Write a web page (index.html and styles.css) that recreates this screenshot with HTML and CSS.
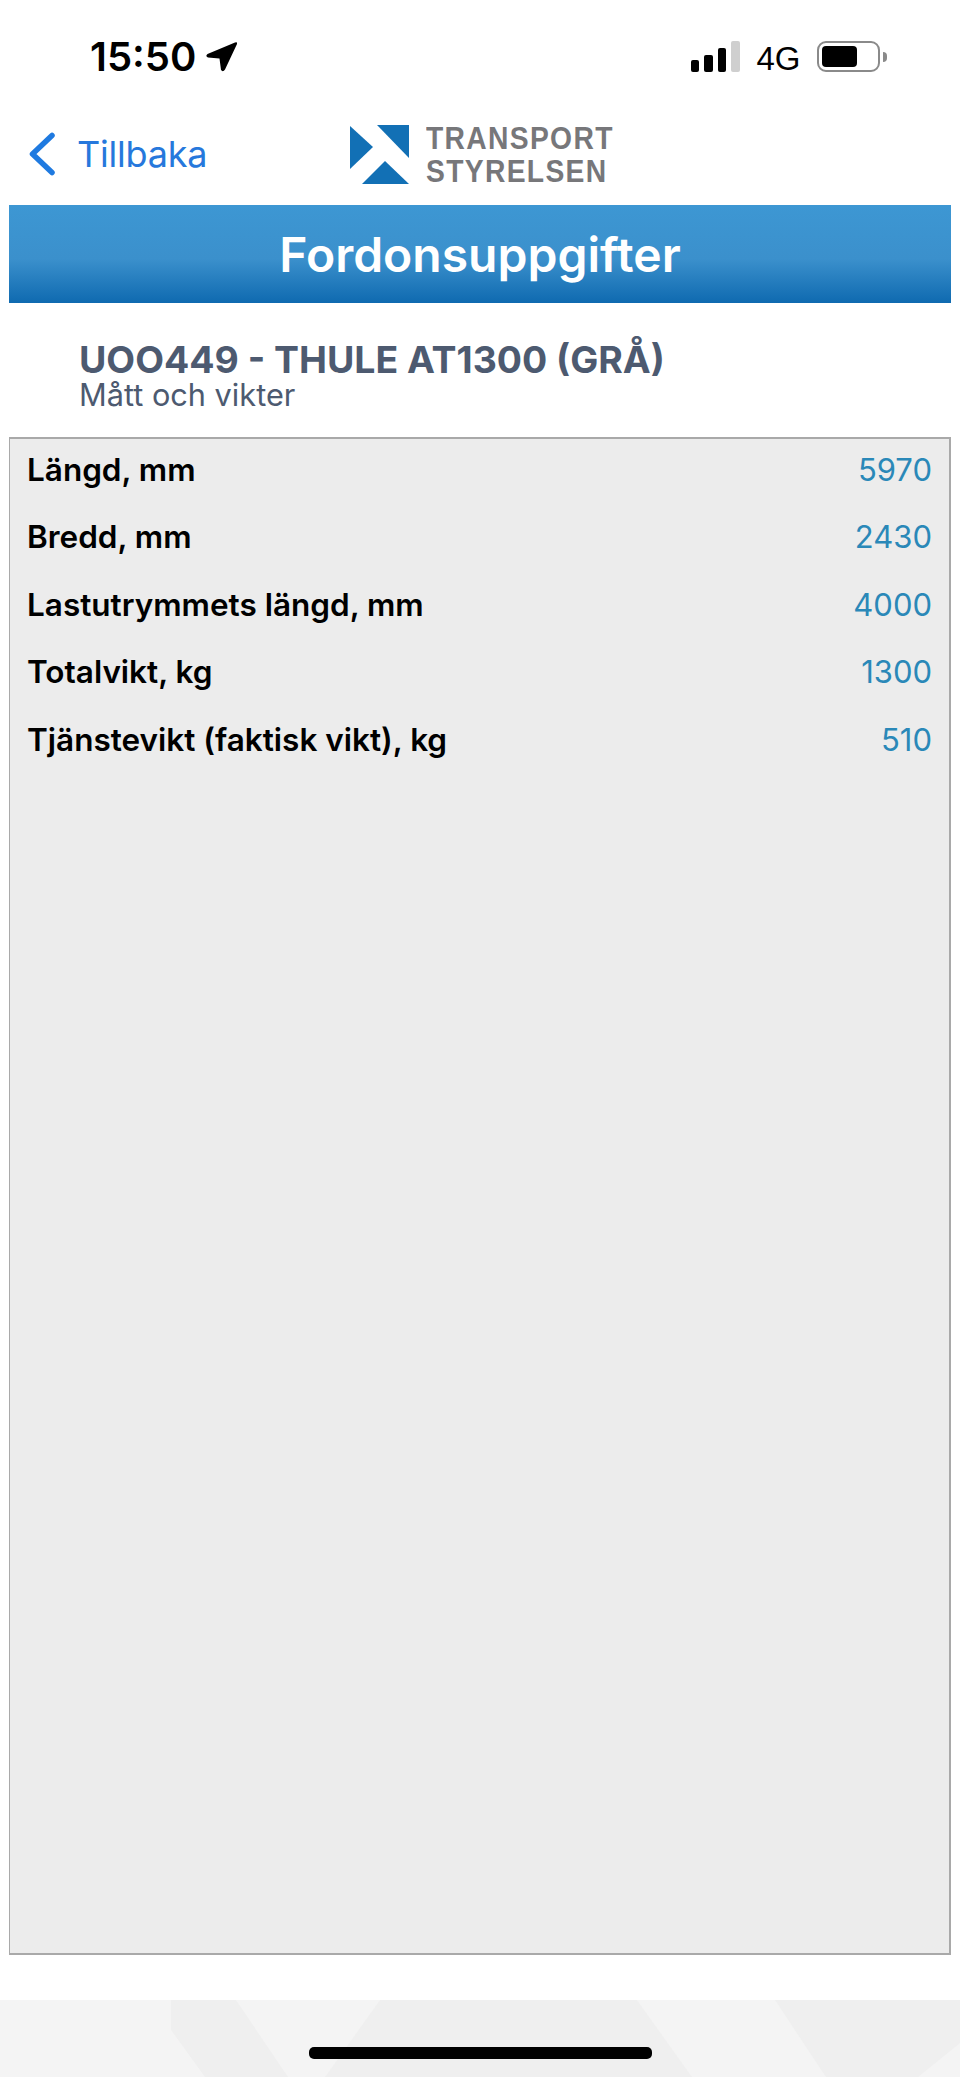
FILE: index.html
```html
<!DOCTYPE html>
<html lang="sv">
<head>
    <meta charset="UTF-8">
    <meta name="viewport" content="width=device-width, initial-scale=1.0">
    <title>Fordonsuppgifter</title>
    <link rel="stylesheet" href="styles.css">
</head>
<body>
    <div class="status-bar">
        <div class="status-left">
            <span class="clock">15:50</span>
            <svg class="location-icon" width="32" height="32" viewBox="0 0 32 32">
                <path d="M29 1.5 Q31.5 0.5 31 3 L19 28.5 Q17 31.5 15 29 L13.5 17.5 L2 16.5 Q-1 15 1.5 13 Z" fill="#000"/>
            </svg>
        </div>
        <div class="status-right">
            <div class="signal">
                <span class="bar bar-1"></span>
                <span class="bar bar-2"></span>
                <span class="bar bar-3"></span>
                <span class="bar bar-4"></span>
            </div>
            <span class="network">4G</span>
            <div class="battery">
                <div class="battery-body"><div class="battery-level"></div></div>
                <div class="battery-tip"></div>
            </div>
        </div>
    </div>

    <div class="nav-bar">
        <div class="back-link">
            <svg width="28" height="44" viewBox="0 0 28 44" fill="none">
                <path d="M24 3.5 L4.5 22 L24 40.5" stroke="#1f7ae0" stroke-width="5.5" stroke-linecap="round" stroke-linejoin="round"/>
            </svg>
            <span>Tillbaka</span>
        </div>
        <div class="logo">
            <svg width="60" height="60" viewBox="0 0 60 60">
                <path d="M0 1 L23 22 L0 44 Z" fill="#1270b5"/>
                <path d="M27 0 L59 0 L59 33 Z" fill="#1270b5"/>
                <path d="M12 59 L35 36 L59 59 Z" fill="#1270b5"/>
            </svg>
            <div class="logo-text">TRANSPORT<br>STYRELSEN</div>
        </div>
    </div>

    <div class="page-title">Fordonsuppgifter</div>

    <div class="vehicle">
        <div class="vehicle-name">UOO449 - THULE AT1300 (GRÅ)</div>
        <div class="vehicle-sub">Mått och vikter</div>
    </div>

    <div class="data-panel">
        <div class="row"><span class="label">Längd, mm</span><span class="value">5970</span></div>
        <div class="row"><span class="label">Bredd, mm</span><span class="value">2430</span></div>
        <div class="row"><span class="label">Lastutrymmets längd, mm</span><span class="value">4000</span></div>
        <div class="row"><span class="label">Totalvikt, kg</span><span class="value">1300</span></div>
        <div class="row"><span class="label">Tjänstevikt (faktisk vikt), kg</span><span class="value">510</span></div>
    </div>

    <div class="panel-foot"></div>

    <div class="home-area">
        <svg class="backdrop" width="960" height="77" viewBox="0 0 960 77">
            <path d="M171 0 L236 0 L288 77 L205 77 L171 30 Z" fill="#efefef"/>
            <path d="M380 0 L637 0 L692 77 L508 77 L325 77 Z" fill="#efefef"/>
            <path d="M775 0 L960 0 L960 43 L918 77 L826 77 Z" fill="#efefef"/>
        </svg>
        <div class="home-indicator"></div>
    </div>
</body>
</html>
```

FILE: styles.css
```css
* {
    margin: 0;
    padding: 0;
    box-sizing: border-box;
}

body {
    font-family: Inter, 'Liberation Sans', sans-serif;
    background: #fff;
    width: 960px;
    height: 2077px;
    overflow: hidden;
}

.status-bar {
    height: 115px;
    padding: 37px 73px 0 90px;
    display: flex;
    justify-content: space-between;
    align-items: flex-start;
}

.status-left {
    display: flex;
    align-items: center;
    gap: 10px;
}

.clock {
    font-size: 40px;
    line-height: 40px;
    font-weight: 600;
    color: #000;
}

.status-right {
    display: flex;
    align-items: flex-start;
    gap: 16.5px;
    margin-top: 4px;
}

.signal {
    display: flex;
    align-items: flex-end;
    gap: 5px;
    height: 31px;
}

.bar {
    width: 8.6px;
    border-radius: 2px;
    background: #000;
}

.bar-1 { height: 12px; }
.bar-2 { height: 17px; }
.bar-3 { height: 24px; }
.bar-4 { height: 31px; background: #cfcfcf; }

.network {
    font-size: 33px;
    line-height: 36px;
    color: #000;
    font-family: 'Liberation Sans', sans-serif;
}

.battery {
    display: flex;
    align-items: center;
    gap: 3px;
}

.battery-body {
    width: 63px;
    height: 31px;
    border: 2px solid #8a8a8a;
    border-radius: 9px;
    padding: 3px;
}

.battery-level {
    width: 35px;
    height: 100%;
    background: #000;
    border-radius: 4px;
}

.battery-tip {
    width: 4px;
    height: 10px;
    background: #8a8a8a;
    border-radius: 0 4px 4px 0;
}

.nav-bar {
    height: 90px;
    position: relative;
    display: flex;
    align-items: center;
    padding: 0 0 12px 28px;
}

.back-link {
    display: flex;
    align-items: center;
    gap: 21px;
    font-size: 36px;
    letter-spacing: -0.2px;
    color: #2678dc;
}

.logo {
    position: absolute;
    left: 350px;
    top: 7px;
    display: flex;
    gap: 16px;
    align-items: center;
}

.logo-text {
    font-family: 'Liberation Sans', sans-serif;
    font-size: 32px;
    line-height: 33px;
    font-weight: 700;
    letter-spacing: 1.5px;
    color: #77777a;
    transform: scaleX(0.883);
    transform-origin: left center;
}

.page-title {
    margin: 0 9px;
    height: 98px;
    background: linear-gradient(#3d97d3 0%, #3b90cc 55%, #0f6ab0 100%);
    color: #fff;
    font-size: 48px;
    font-weight: 600;
    display: flex;
    align-items: center;
    justify-content: center;
}

.vehicle {
    height: 134px;
    padding: 36px 0 0 79px;
    color: #4d5a70;
}

.vehicle-name {
    font-size: 37.4px;
    line-height: 42px;
    font-weight: 700;
}

.vehicle-sub {
    font-size: 30.7px;
    line-height: 28px;
}

.data-panel {
    margin: 0 9px;
    height: 1518px;
    background: #ececec;
    border: 1px solid #a9a9a9;
    border-top-width: 2px;
    border-bottom-width: 2px;
    border-right-width: 2px;
    padding: 0 17px;
    display: flex;
    flex-direction: column;
    gap: 6.4px;
}

.row {
    height: 61px;
    display: flex;
    justify-content: space-between;
    align-items: center;
    font-size: 31.5px;
}

.label {
    font-weight: 600;
    color: #000;
}

.value {
    font-size: 31px;
    color: #2a88b8;
}

.panel-foot {
    margin: 0 9px;
    height: 45px;
    background: #fff;
}

.home-area {
    position: relative;
    height: 77px;
    background: #f4f4f4;
}

.backdrop {
    position: absolute;
    left: 0;
    top: 0;
}

.home-indicator {
    position: absolute;
    left: 309px;
    top: 47px;
    width: 343px;
    height: 12px;
    border-radius: 5px;
    background: #000;
}
```
